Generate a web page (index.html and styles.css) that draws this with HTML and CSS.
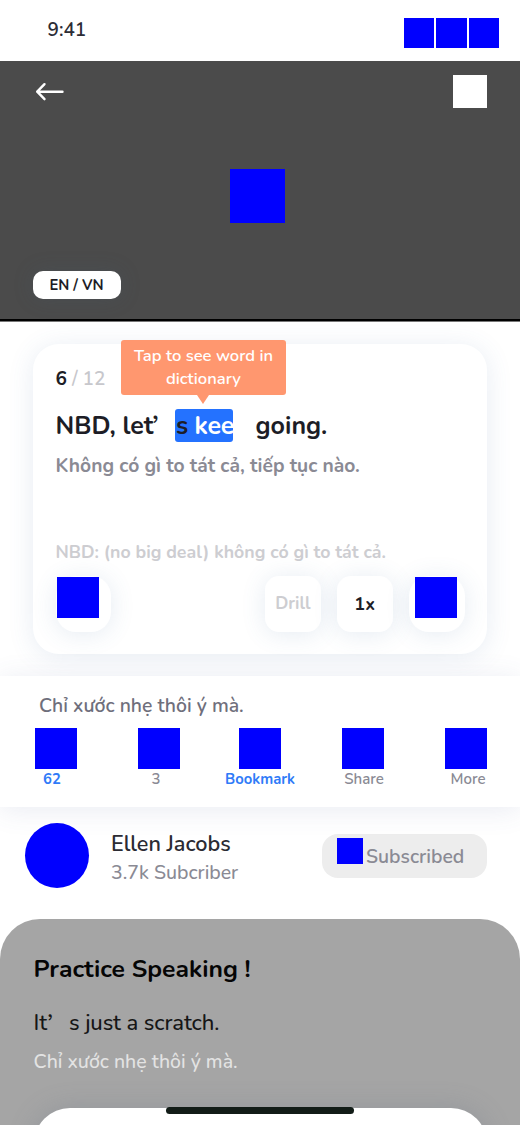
FILE: index.html
```html
<!DOCTYPE html>
<html lang="vi">
<head>
<meta charset="utf-8">
<meta name="viewport" content="width=device-width">
<title>Practice Speaking</title>
<link rel="stylesheet" href="styles.css">
</head>
<body>
<main class="screen">
  <header class="status">
    <span class="time">9:41</span>
    <div class="signals"><i></i><i class="wide"></i><i></i></div>
  </header>
  <section class="video">
    <div class="video-top">
      <svg class="back" width="30" height="20" viewBox="0 0 30 20" fill="none" stroke="#fff" stroke-width="2.4" stroke-linecap="round" stroke-linejoin="round"><path d="M27.5 10.7H2.2M9.5 3.2L2.2 10.7L9.5 18.2"/></svg>
      <i class="cast"></i>
    </div>
    <i class="play"></i>
    <span class="lang">EN / VN</span>
  </section>
  <section class="card-area">
    <article class="card">
      <p class="count"><b>6</b> / 12</p>
      <div class="tip"><span>Tap to see word in</span><span>dictionary</span></div>
      <h1 class="phrase"><span class="w1">NBD, let</span><span class="apos">’</span><span class="mark"><span class="s">s</span> kee</span><span class="w2">going.</span></h1>
      <p class="trans">Không có gì to tát cả, tiếp tục nào.</p>
      <p class="note">NBD: (no big deal) không có gì to tát cả.</p>
      <div class="controls">
        <div class="btn round first"><i></i></div>
        <div class="btn drill">Drill</div>
        <div class="btn speed">1x</div>
        <div class="btn round last"><i></i></div>
      </div>
    </article>
  </section>
  <section class="social">
    <p class="caption">Chỉ xước nhẹ thôi ý mà.</p>
    <div class="actions">
      <div class="act on a1"><i></i><span>62</span></div>
      <div class="act a2"><i></i><span>3</span></div>
      <div class="act on a3"><i></i><span>Bookmark</span></div>
      <div class="act a4"><i></i><span>Share</span></div>
      <div class="act a5"><i></i><span>More</span></div>
    </div>
  </section>
  <section class="channel">
    <i class="avatar"></i>
    <div class="who"><p class="name">Ellen Jacobs</p><p class="subs">3.7k Subcriber</p></div>
    <div class="subscribed"><i></i><span>Subscribed</span></div>
  </section>
  <section class="practice">
    <h2 class="title">Practice Speaking !</h2>
    <p class="line"><span class="l1">It</span><span class="apos small">’</span><span class="l2">s just a scratch.</span></p>
    <p class="line-vn">Chỉ xước nhẹ thôi ý mà.</p>
    <div class="sheet"></div>
    <i class="home"></i>
  </section>
</main>
</body>
</html>
```
FILE: styles.css
```css
* { box-sizing: border-box; margin: 0; padding: 0; }
body { background: #fff; font-family: Nunito, Lato, "Noto Sans", sans-serif; color: #1d1d26; }
i { display: block; background: #00f; flex: none; }
.screen { width: 520px; height: 1125px; overflow: hidden; background: #fff; white-space: nowrap; }

.status { height: 61px; display: flex; justify-content: space-between; padding: 18px 21px 0 47.5px; }
.time { font-size: 19px; line-height: 24px; font-weight: 600; color: #2c2c35; }
.signals { display: flex; gap: 2px; }
.signals i { width: 30px; height: 30px; }
.signals .wide { width: 31px; }

.video { height: 260px; background: #4b4b4b; border-bottom: 2px solid #000; box-shadow: 0 1px #777; padding: 14px 33px 0; display: flex; flex-direction: column; }
.video-top { display: flex; justify-content: space-between; height: 33px; }
.back { margin: 6px 0 0 2px; }
.cast { width: 34px; height: 33px; background: #fff; }
.play { width: 55px; height: 54px; margin: 61px 0 0 197px; }
.lang { width: 88px; height: 28px; margin-top: 48px; border-radius: 10px; background: #fff; padding-right: 1px; text-align: center; font-size: 14.8px; line-height: 29px; font-weight: 700; box-shadow: 0 0 20px rgba(70,90,110,.22); }

.card-area { height: 355px; padding: 23px 33px; clip-path: inset(1px 0 0 0); }
.card { position: relative; height: 310px; border-radius: 26px; background: #fff; box-shadow: 0 3px 26px rgba(70,110,160,.13); padding: 23px 22.5px 0; }
.count { font-size: 19px; line-height: 25px; color: #c7c7cc; font-weight: 600; }
.count b { color: #1d1d26; font-weight: 700; }
.tip { position: absolute; left: 88px; top: -4.5px; width: 165px; height: 55px; border-radius: 3px; background: #ff976f; color: #fff; text-align: center; font-size: 16.6px; line-height: 23px; font-weight: 600; padding-top: 4.5px; }
.tip span { display: block; }
.tip::after { content: ""; position: absolute; left: 76px; top: 55px; border: 6px solid transparent; border-top: 9px solid #ff976f; border-bottom: 0; }
.phrase { display: flex; height: 33px; margin-top: 17px; font-size: 25px; line-height: 34px; font-weight: 700; }
.w1 { width: 97px; }
.apos { font-family: "Noto Sans CJK SC", sans-serif; width: 22.5px; font-weight: 500; }
.mark { width: 58px; height: 33px; border-radius: 3px; background: #2472ff; color: #fff; padding-left: 1px; letter-spacing: -.25px; }
.mark .s { color: #1d1d26; }
.w2 { margin-left: 22.5px; }
.trans { margin-top: 12px; font-size: 19.25px; line-height: 25px; font-weight: 700; color: #8a8a94; }
.note { margin-top: 61px; font-size: 17.75px; line-height: 24px; font-weight: 700; color: #cdcdd1; }
.controls { display: flex; margin-top: 12px; }
.btn { width: 56px; height: 56px; border-radius: 14px; background: #fff; box-shadow: 0 2px 24px rgba(70,110,160,.14); text-align: center; font-size: 18px; line-height: 56px; font-weight: 700; }
.round { border-radius: 20px; }
.round i { width: 42px; height: 41px; margin-left: 1.5px; margin-top: 1px; }
.round.last i { margin-left: 6px; }
.drill { color: #cdcdd1; margin-left: 153.5px; font-size: 17.2px; }
.speed { margin-left: 16px; }
.last { margin-left: 16px; }

.social { position: relative; height: 131px; padding: 18px 33px 0 35px; background: #fff; box-shadow: 0 3px 26px rgba(70,90,150,.12); }
.caption { margin-left: 4px; height: 34px; font-size: 19.4px; line-height: 24px; font-weight: 600; color: #6f6f7c; }
.actions { display: flex; }
.act { width: 42px; display: flex; flex-direction: column; align-items: center; font-size: 15px; line-height: 20px; font-weight: 600; color: #8a8a94; }
.act i { width: 42px; height: 41px; }
.act.on { color: #2f7bf8; font-weight: 700; font-size: 14.8px; }
.a1 span { margin-right: 8px; }
.a2 { margin-left: 61px; }
.a2 span { margin-right: 6px; }
.a3 { margin-left: 59px; }
.a4, .a5 { margin-left: 61px; }
.a4 span { margin-left: 2px; }
.a5 span { margin-left: 4px; }

.channel { height: 112px; display: flex; align-items: flex-start; padding: 16px 33px 0 25px; }
.avatar { width: 64px; height: 65px; border-radius: 50%; }
.who { margin: 7px 0 0 22px; flex: 1; }
.name { font-size: 21.6px; line-height: 28px; font-weight: 600; color: #2b2b33; }
.subs { font-size: 19.5px; line-height: 30px; font-weight: 500; color: #8a8a94; }
.subscribed { display: flex; width: 165px; height: 44px; margin-top: 11px; border-radius: 16px; background: #ededed; padding: 4px 0 0 15px; color: #8a8a94; font-size: 19.4px; line-height: 38px; font-weight: 600; }
.subscribed i { width: 26px; height: 26px; margin-right: 3px; }

.practice { position: relative; height: 206px; border-radius: 40px 40px 0 0; background: #a5a5a5; padding: 33px 33.5px 0; overflow: hidden; }
.title { font-size: 24.7px; line-height: 34px; font-weight: 700; color: #050505; }
.line { display: flex; margin-top: 22px; height: 30px; font-size: 22px; line-height: 30px; font-weight: 500; letter-spacing: -.1px; color: #161616; }
.l1 { width: 14px; }
.small { font-weight: 400; width: 21.5px; }
.line-vn { margin-top: 11px; font-size: 19.5px; line-height: 26px; font-weight: 500; color: #e3e3e3; }
.sheet { height: 60px; margin-top: 33px; border-radius: 36px 36px 0 0; background: #fff; box-shadow: 0 0 26px rgba(110,120,135,.3); }
.home { position: absolute; left: 166px; top: 188px; width: 188px; height: 7px; border-radius: 4px; background: #121c17; }
```
